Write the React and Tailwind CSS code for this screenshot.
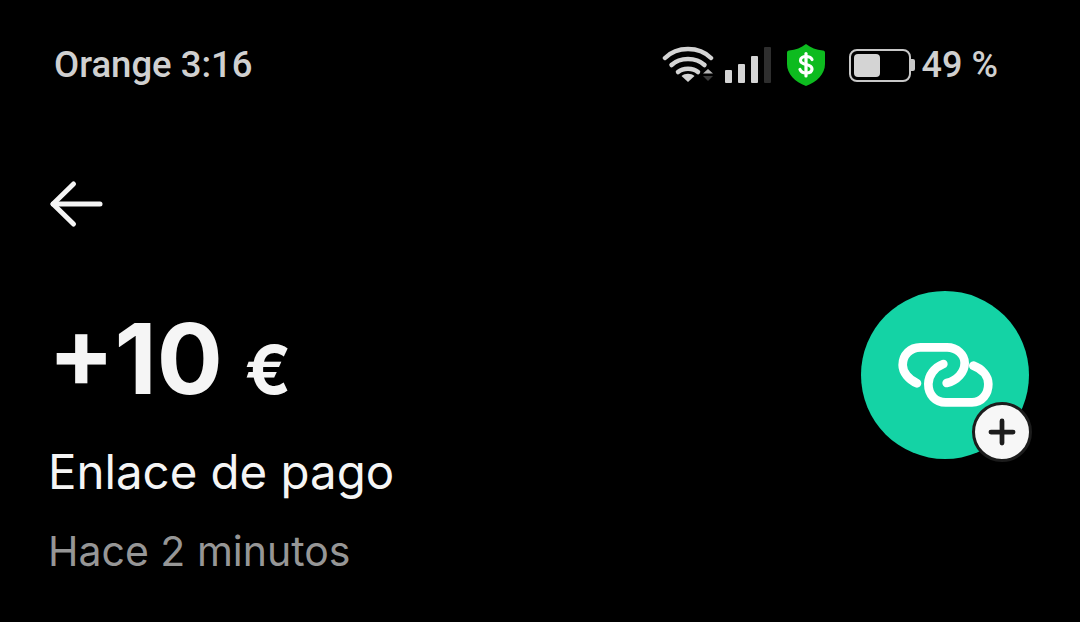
import React from "react";
import { Plus } from "lucide-react";

const WifiIcon = () => (
  <svg width="52" height="40" viewBox="0 0 52 40" fill="none">
    <path d="M3 13 C15 1 37 1 49 13" stroke="#d4d4d4" strokeWidth="4.500" strokeLinecap="round" />
    <path d="M9.500 20 C18 12 34 12 42.500 20" stroke="#d4d4d4" strokeWidth="4.500" strokeLinecap="round" />
    <path d="M16 27 C21 22.500 31 22.500 36 27" stroke="#d4d4d4" strokeWidth="4.500" strokeLinecap="round" />
    <path d="M19.500 31 C23 28 29 28 32.500 31 L26 37 Z" fill="#d4d4d4" />
    <path d="M41 28.500 L46 24 L51 28.500 Z" fill="#b5b5b5" />
    <path d="M41 31 L51 31 L46 36 Z" fill="#3a3a3a" />
  </svg>
);

const SignalBars = () => (
  <div className="flex items-end gap-[6px] h-[36px]">
    <div className="w-[7px] h-[13px] bg-[#d4d4d4] rounded-[1px]" />
    <div className="w-[7px] h-[19px] bg-[#d4d4d4] rounded-[1px]" />
    <div className="w-[7px] h-[27px] bg-[#d4d4d4] rounded-[1px]" />
    <div className="w-[7px] h-[36px] bg-[#2e2e2e] rounded-[1px]" />
  </div>
);

const ShieldIcon = () => (
  <svg width="38" height="42" viewBox="0 0 38 42">
    <path d="M19 0 C24 3.500 29 6 36 6.500 C37.500 6.500 38 7.500 38 9 L38 20 C38 30 30 38 19 42 C8 38 0 30 0 20 L0 9 C0 7.500 0.500 6.500 2 6.500 C9 6 14 3.500 19 0 Z" fill="#0dbb1f" />
    <path d="M25 15.500 C24 13 22 12.500 19 12.500 C16 12.500 13.500 14 13.500 16.500 C13.500 22 25 19 25 25 C25 27.500 22.500 29 19 29 C16 29 14 28 13 25.500" fill="none" stroke="#fff" strokeWidth="3.200" strokeLinecap="round" />
    <path d="M19 9.500 V32" stroke="#fff" strokeWidth="3.200" strokeLinecap="round" />
  </svg>
);

const Battery = () => (
  <div className="flex items-center">
    <div className="w-[62px] h-[33px] border-2 border-[#c8c8c8] rounded-[8px] p-[3px] flex">
      <div className="w-[26px] bg-[#d4d4d4] rounded-[4px]" />
    </div>
    <div className="w-[4px] h-[12px] bg-[#c8c8c8] rounded-r-[2px]" />
  </div>
);

const BackArrow = () => (
  <svg width="56" height="52" viewBox="0 0 56 52" fill="none" stroke="#f5f5f5" strokeWidth="5" strokeLinecap="round" strokeLinejoin="round">
    <path d="M4 26 H51" />
    <path d="M24.500 6 L4 26 L24.500 46" />
  </svg>
);

const LinkIcon = () => (
  <svg width="96" height="72" viewBox="0 0 288 216" fill="none" stroke="#ffffff" strokeWidth="26" strokeLinecap="round">
    <path d="M60 133 C35 122 17 100 17 78 C17 48 40 25 70 25 H150 C180 25 203 48 203 72 C203 100 180 125 149 132" />
    <path d="M139 75 C112 85 94 110 94 135 C94 167 115 190 146 190 H225 C255 190 274 165 274 135 C274 110 255 90 229 80" />
  </svg>
);

const App = () => {
  return (
    <div className="w-[1080px] h-[622px] bg-black overflow-hidden font-['Inter',sans-serif]">
      {/* Status bar */}
      <div className="flex justify-between items-center pl-[54px] pr-[82px] pt-[42px] h-[88px]">
        <span className="font-['Roboto',sans-serif] font-medium text-[36.500px] leading-[44px] text-[#d0d0d0]">Orange 3:16</span>
        <div className="flex items-center">
          <WifiIcon />
          <div className="ml-[11px]"><SignalBars /></div>
          <div className="ml-[16px]"><ShieldIcon /></div>
          <div className="ml-[24px]"><Battery /></div>
          <span className="ml-[7px] font-['Roboto',sans-serif] font-medium text-[36px] leading-[44px] text-[#d0d0d0]">49 %</span>
        </div>
      </div>

      {/* Back */}
      <div className="pl-[49px] pt-[90px]">
        <BackArrow />
      </div>

      {/* Transaction */}
      <div className="flex justify-between pl-[48px] pr-[51px] pt-[61px]">
        <div className="flex flex-col">
          <div className="flex items-baseline mt-[10px] text-[#f5f5f5] font-bold">
            <span className="text-[98px] leading-[116px]">+10</span>
            <span className="ml-[22px] text-[68px] leading-[116px]">€</span>
          </div>
          <span className="mt-[18px] text-[47.400px] leading-[54px] text-[#f5f5f5]">Enlace de pago</span>
          <span className="mt-[29px] text-[41px] leading-[46px] text-[#969696]">Hace 2 minutos</span>
        </div>
        <div className="relative w-[168px] h-[168px] rounded-full bg-[#14d3a5] flex items-center justify-center">
          <LinkIcon />
          <div className="absolute right-[-3px] bottom-[-3px] w-[60px] h-[60px] rounded-full bg-[#f7f7f7] border-[3px] border-[#1c1c1c] flex items-center justify-center">
            <Plus size={38} color="#1c1c1c" strokeWidth={3} />
          </div>
        </div>
      </div>
    </div>
  );
};

export default App;
